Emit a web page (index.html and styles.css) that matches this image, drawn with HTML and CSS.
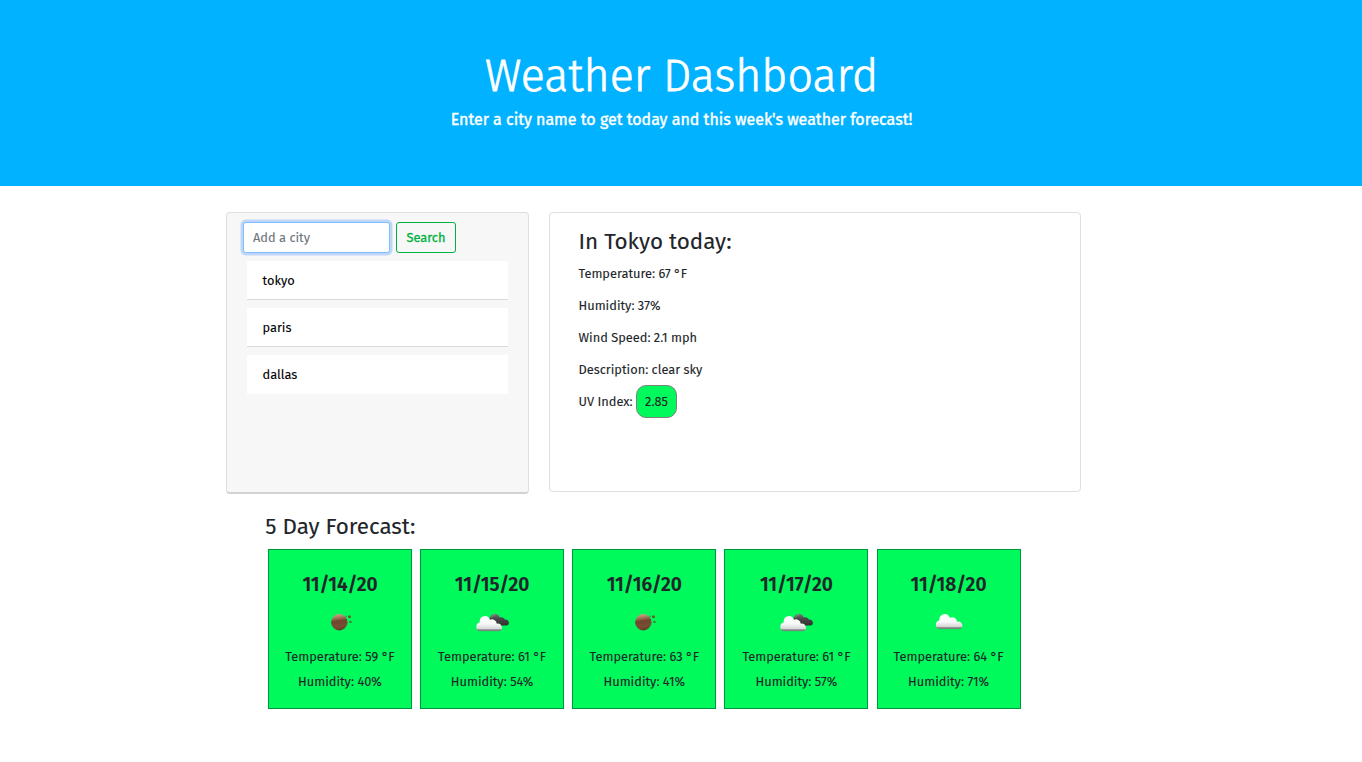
FILE: index.html
```html
<!DOCTYPE html>
<html lang="en">
<head>
<meta charset="utf-8">
<title>Weather Dashboard</title>
<link rel="stylesheet" href="styles.css">
</head>
<body>
<svg class="defs" width="0" height="0" aria-hidden="true">
  <defs>
    <linearGradient id="white" x1="0" y1="0" x2="0" y2="1">
      <stop offset="0" stop-color="#fff"/><stop offset=".5" stop-color="#fafafa"/><stop offset=".82" stop-color="#d8d8d8"/><stop offset=".9" stop-color="#8a8a8a"/><stop offset="1" stop-color="#6a8a70"/>
    </linearGradient>
    <linearGradient id="dark" x1="0" y1="0" x2="0" y2="1">
      <stop offset="0" stop-color="#777"/><stop offset=".4" stop-color="#484848"/><stop offset="1" stop-color="#303030"/>
    </linearGradient>
    <linearGradient id="brown" x1=".4" y1="0" x2=".55" y2="1">
      <stop offset="0" stop-color="#c9a88c"/><stop offset=".2" stop-color="#a77c5f"/><stop offset=".42" stop-color="#6e452e"/><stop offset=".75" stop-color="#7a4e33"/><stop offset="1" stop-color="#5d3b25"/>
    </linearGradient>
    <symbol id="cloud" viewBox="0 0 28 16" preserveAspectRatio="none">
      <path fill="url(#white)" d="M4.500 15.500A4.300 4.300 0 0 1 4 7 5.500 5.700 0 0 1 14.600 4.400 5 5 0 0 1 21.800 8.300 3.700 3.700 0 0 1 24.500 15.500Z"/>
    </symbol>
    <symbol id="sun" viewBox="0 0 50 50">
      <circle cx="24.300" cy="25.300" r="8.200" fill="url(#brown)"/>
      <rect x="33.100" y="18.600" width="2.700" height="2.400" rx=".7" fill="#68562b"/>
      <rect x="34.300" y="23.900" width="2.400" height="2.100" rx=".7" fill="#48762f"/>
      <rect x="30.400" y="18.500" width="1.600" height="1.500" rx=".6" fill="#2aa442"/>
    </symbol>
    <symbol id="clouds" viewBox="0 0 50 50">
      <path fill="url(#dark)" d="M23 25C21.500 20 25 16.700 28.500 17.100c2 .1 3.200 1.200 4.300 3.200 3-.5 4.700.7 5.100 2.300 2.700.2 4.100 1.400 4 3.300-.1 1.800-1.400 2.700-3.600 2.700H30z"/>
      <path fill="none" stroke="#8b9590" stroke-width=".8" d="M24.500 20.500c1-2 2.300-2.700 4-2.700"/>
      <use href="#cloud" x="8.800" y="18.300" width="27" height="16.500"/>
    </symbol>
    <symbol id="overcast" viewBox="0 0 50 50">
      <use href="#cloud" x="11.300" y="16.200" width="28" height="16.500"/>
    </symbol>
  </defs>
</svg>
<header class="hero">
  <h1 class="hero-title">Weather Dashboard</h1>
  <p class="hero-lead">Enter a city name to get today and this week's weather forecast!</p>
</header>
<main class="page">
  <div class="panels">
    <section class="search-card">
      <form class="search-form">
        <input class="city-input" type="text" placeholder="Add a city" aria-label="City">
        <button class="search-button" type="button">Search</button>
      </form>
      <ul class="cities">
        <li class="city">tokyo</li>
        <li class="city">paris</li>
        <li class="city">dallas</li>
      </ul>
    </section>
    <section class="today-card">
      <h2 class="heading">In Tokyo today:</h2>
      <p class="stat">Temperature: 67 °F</p>
      <p class="stat">Humidity: 37%</p>
      <p class="stat">Wind Speed: 2.1 mph</p>
      <p class="stat">Description: clear sky</p>
      <p class="stat">UV Index: <span class="uv">2.85</span></p>
    </section>
  </div>
  <section class="forecast">
    <h2 class="heading">5 Day Forecast:</h2>
    <div class="days">
      <article class="day"><h3 class="date">11/14/20</h3><svg class="icon" viewBox="0 0 50 50"><use href="#sun"/></svg><p class="reading">Temperature: 59 °F</p><p class="reading humid">Humidity: 40%</p></article>
      <article class="day"><h3 class="date">11/15/20</h3><svg class="icon" viewBox="0 0 50 50"><use href="#clouds"/></svg><p class="reading">Temperature: 61 °F</p><p class="reading humid">Humidity: 54%</p></article>
      <article class="day"><h3 class="date">11/16/20</h3><svg class="icon" viewBox="0 0 50 50"><use href="#sun"/></svg><p class="reading">Temperature: 63 °F</p><p class="reading humid">Humidity: 41%</p></article>
      <article class="day"><h3 class="date">11/17/20</h3><svg class="icon" viewBox="0 0 50 50"><use href="#clouds"/></svg><p class="reading">Temperature: 61 °F</p><p class="reading humid">Humidity: 57%</p></article>
      <article class="day"><h3 class="date">11/18/20</h3><svg class="icon" viewBox="0 0 50 50"><use href="#overcast"/></svg><p class="reading">Temperature: 64 °F</p><p class="reading humid">Humidity: 71%</p></article>
    </div>
  </section>
</main>
</body>
</html>
```
FILE: styles.css
```css
* { box-sizing: border-box; }
body { margin: 0; background: #fff; color: #212529; font: 12.8px/24px "Fira Sans", "Noto Sans", sans-serif; -webkit-text-stroke: 0.1px; }
h1, h2, h3, p, ul { margin: 0; padding: 0; }
.defs { display: block; width: 0; height: 0; }
.hero { height: 186px; padding: 49px 0 0 1px; background: #00b2ff; color: #fff; text-align: center; }
.hero-title { font-size: 44.8px; font-weight: 300; line-height: 54px; -webkit-text-stroke: 0.8px; }
.hero-lead { margin-top: 5px; font-size: 16px; font-weight: 400; line-height: 24px; -webkit-text-stroke: 0.4px; }
.page { width: 855px; margin: 26px 0 0 226px; }
.panels { display: flex; align-items: flex-start; gap: 20px; }
.search-card { width: 303px; height: 282px; padding: 9px 16px; border: 1px solid #dfdfdf; border-bottom: 2px solid #d3d3d3; border-radius: 4px; background: #f7f7f7; }
.search-form { display: flex; gap: 6px; }
.city-input { width: 147px; height: 31px; padding: 0 9px; border: 1px solid #80bdff; border-radius: 3px; outline: 0; background: #fff; box-shadow: 0 0 0 2.5px #bfd6f9; font: inherit; }
.city-input::placeholder { color: #6c757d; opacity: 1; }
.search-button { width: 60px; height: 31px; padding: 0; border: 1px solid #00b140; border-radius: 3px; background: transparent; color: #00b140; font: inherit; -webkit-text-stroke: 0.3px; }
.cities { margin: 8px 4px 0; list-style: none; display: flex; flex-direction: column; gap: 8px; }
.city { height: 39px; padding: 1px 15.5px 0; border-bottom: 1px solid #dadada; background: #fff; color: #000; line-height: 38px; }
.city:last-child { border-bottom: 0; }
.today-card { width: 532px; height: 280px; padding: 15px 28.5px; border: 1px solid #dfdfdf; border-radius: 4px; }
.heading { font-size: 22.4px; font-weight: 400; line-height: 27px; }
.stat { height: 32px; line-height: 32px; }
.heading + .stat { margin-top: 3px; }
.uv { display: inline-block; height: 33px; width: 41px; margin-top: -1px; border: 1px solid #808080; border-radius: 10px; background: #00fa5c; text-align: center; line-height: 31px; vertical-align: top; }
.forecast { margin-top: 19px; padding-left: 39.3px; }
.days { display: grid; grid-template-columns: repeat(5, 144px); gap: 8.15px; margin: 9px 0 0 2.7px; }
.day { display: flex; flex-direction: column; align-items: center; height: 160px; padding-top: 23px; border: 1px solid #009640; background: #00fa5c; }
.date { font-size: 19.2px; font-weight: 600; line-height: 24px; }
.icon { width: 50px; height: 50px; margin: 0 0 -2px; }
.reading { line-height: 24px; }
.humid { margin-top: 1px; }
```
